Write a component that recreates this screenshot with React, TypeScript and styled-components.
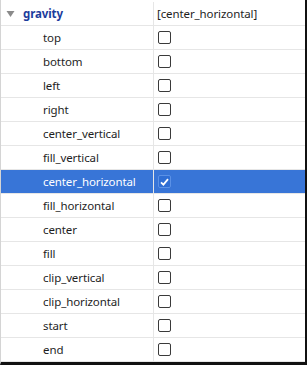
import React from 'react';
import styled, {createGlobalStyle} from 'styled-components';

const GlobalStyle = createGlobalStyle`
  html, body {
    margin: 0;
    padding: 0;
    background: #ffffff;
  }
  body {
    font-family: "Noto Sans", "Open Sans", sans-serif;
  }
`;

const ROW_H = 24;
const LABEL_W = 154;

const Frame = styled.div`
  width: 307px;
  height: 365px;
  box-sizing: border-box;
  padding-top: 2px;
  border-left: 1px solid #d4d4d4;
  border-right: 2px solid #111;
  border-bottom: 3px solid #111;
  background: #fff;
  overflow: hidden;
`;

const Row = styled.div<{$selected?: boolean}>`
  display: flex;
  height: ${ROW_H}px;
  box-sizing: border-box;
  border-bottom: 1px solid #e6e6e6;
  background: ${({$selected}) => ($selected ? '#3875d7' : 'transparent')};
  color: ${({$selected}) => ($selected ? '#fff' : '#1e1e1e')};
  font-size: 11.5px;
  letter-spacing: -0.1px;
`;

const LabelCell = styled.div<{$indent: number}>`
  width: ${LABEL_W - 1}px;
  flex: none;
  display: flex;
  align-items: center;
  padding-left: ${({$indent}) => $indent}px;
  box-sizing: border-box;
  border-right: 1px solid #e6e6e6;
  white-space: nowrap;
`;

const ValueCell = styled.div`
  flex: 1;
  display: flex;
  align-items: center;
  padding-left: 3px;
  white-space: nowrap;
`;

const GroupName = styled.span`
  font-weight: 700;
  color: #1b3c9c;
  margin-left: 8px;
`;

const Box = styled.span<{$checked?: boolean}>`
  width: 13px;
  height: 13px;
  box-sizing: border-box;
  border-radius: 2px;
  border: 1px solid ${({$checked}) => ($checked ? '#5b91e6' : '#3a3a3a')};
  background: ${({$checked}) => ($checked ? '#2f6ed4' : '#fff')};
  display: flex;
  align-items: center;
  justify-content: center;
  margin-left: 1px;
`;

function Arrow() {
  return (
    <svg width="9" height="8" viewBox="0 0 9 8">
      <polygon points="0.5,1 8.5,1 4.5,7" fill="#8a8a8a" />
    </svg>
  );
}

function Check() {
  return (
    <svg width="9" height="8" viewBox="0 0 9 8">
      <polyline points="1,4.3 3.4,6.6 8,1.2" fill="none" stroke="#fff" strokeWidth="1.8" />
    </svg>
  );
}

const flags = [
  'top',
  'bottom',
  'left',
  'right',
  'center_vertical',
  'fill_vertical',
  'center_horizontal',
  'fill_horizontal',
  'center',
  'fill',
  'clip_vertical',
  'clip_horizontal',
  'start',
  'end',
];

export default function App() {
  const selected = 'center_horizontal';
  return (
    <>
      <GlobalStyle />
      <Frame>
        <Row>
          <LabelCell $indent={5}>
            <Arrow />
            <GroupName>gravity</GroupName>
          </LabelCell>
          <ValueCell>[{selected}]</ValueCell>
        </Row>
        {flags.map((f) => (
          <Row key={f} $selected={f === selected}>
            <LabelCell $indent={42}>{f}</LabelCell>
            <ValueCell>
              <Box $checked={f === selected}>{f === selected && <Check />}</Box>
            </ValueCell>
          </Row>
        ))}
      </Frame>
    </>
  );
}
